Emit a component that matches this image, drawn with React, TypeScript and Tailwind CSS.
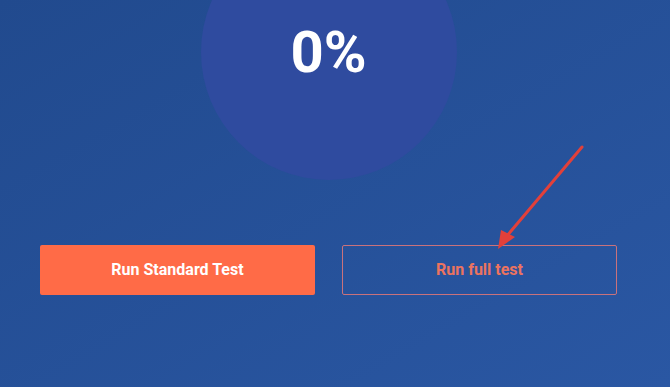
import React from 'react';

export default function App() {
  return (
    <div
      className="relative h-[387px] w-[670px] overflow-hidden bg-gradient-to-br from-[#214a8e] to-[#2a57a3]"
      style={{ fontFamily: 'Roboto, "Liberation Sans", sans-serif' }}
    >
      <div className="flex flex-col items-center pl-[40px] pr-[53px]">
        <div className="-mt-[76px] flex h-[256px] w-[256px] flex-col items-center rounded-full bg-[#2f4b9f] pt-[99px]">
          <span className="text-[58px] font-bold leading-none text-white">0%</span>
        </div>

        <div className="mt-[65px] grid w-full grid-cols-2 gap-[27px]">
          <button className="flex h-[50px] items-center justify-center rounded-[2px] bg-[#ff6b47] text-[16px] font-bold text-white">
            Run Standard Test
          </button>
          <button className="flex h-[50px] items-center justify-center rounded-[2px] border border-[#c9727c] text-[16px] font-bold text-[#ec735f]">
            Run full test
          </button>
        </div>
      </div>

      {/* annotation arrow */}
      <svg className="pointer-events-none absolute left-0 top-0" width="670" height="387">
        <line x1="582" y1="147" x2="506" y2="237" stroke="#e2403a" strokeWidth="3" strokeLinecap="round" />
        <polygon points="498,249 501,230 515,237" fill="#e2403a" />
      </svg>
    </div>
  );
}
